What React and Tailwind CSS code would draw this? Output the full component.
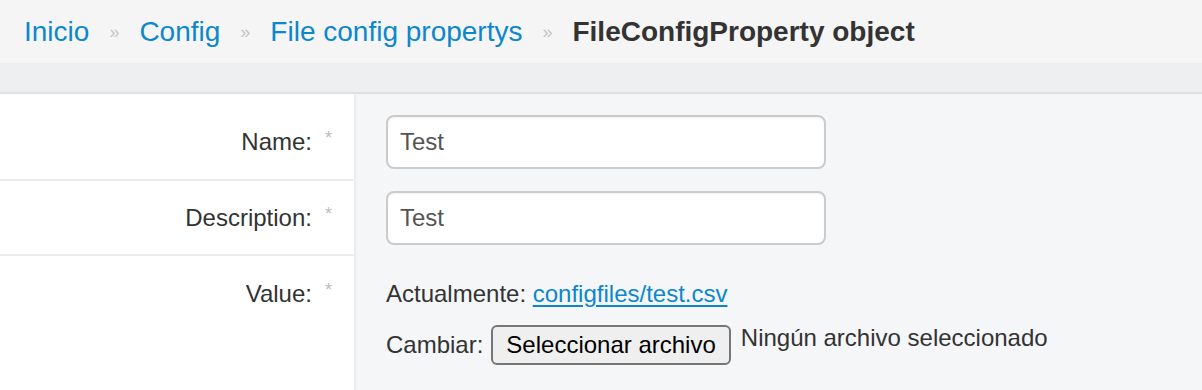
import React from "react";

const font = { fontFamily: '"Liberation Sans", Arial, sans-serif' };

function Crumb({ children }) {
  return (
    <a href="#" className="text-[#0c87cc] hover:underline">
      {children}
    </a>
  );
}

function Sep() {
  return <span className="mx-[20px] text-[18px] text-[#c4c4c4]">»</span>;
}

function Label({ text }) {
  return (
    <div className="flex h-[54px] items-center justify-end pr-[22px] text-[24px] text-[#333]">
      <span>{text}</span>
      <span className="ml-[13px] text-[18px] text-[#bdbdbd] -mt-[8px]">*</span>
    </div>
  );
}

function Row({ label, first, last, children }) {
  return (
    <div className="flex">
      <div
        className={
          "w-[356px] shrink-0 bg-white border-r-2 border-[#ececec] " +
          (last ? "" : "border-b-2 border-b-[#ececec] ") +
          (first ? "pt-[21px] pb-[10px]" : "pt-[10px] pb-[9px]")
        }
      >
        <Label text={label} />
      </div>
      <div
        className={
          "flex-1 bg-[#f5f6f8] pl-[30px] " +
          (first ? "pt-[21px] pb-[10px]" : "pt-[10px] pb-[9px]")
        }
      >
        {children}
      </div>
    </div>
  );
}

function TextInput({ value }) {
  return (
    <input
      type="text"
      defaultValue={value}
      className="h-[54px] w-[440px] rounded-[8px] border-2 border-[#cbcbcb] bg-white px-[12px] text-[24px] text-[#555] shadow-[inset_0_1px_2px_rgba(0,0,0,0.06)] outline-none"
      style={font}
    />
  );
}

export default function App() {
  return (
    <div className="min-h-[390px] bg-[#f5f6f8]" style={font}>
      {/* breadcrumbs */}
      <div className="flex h-[63px] items-center bg-[#f5f5f5] px-[24px] text-[28px] leading-none">
        <Crumb>Inicio</Crumb>
        <Sep />
        <Crumb>Config</Crumb>
        <Sep />
        <Crumb>File config propertys</Crumb>
        <Sep />
        <span className="font-bold text-[#333]">FileConfigProperty object</span>
      </div>
      <div className="h-[31px] border-b-2 border-[#dfe0e2] bg-[#eeeff1]" />

      {/* form */}
      <Row label="Name:" first>
        <TextInput value="Test" />
      </Row>
      <Row label="Description:">
        <TextInput value="Test" />
      </Row>
      <div className="flex h-[134px]">
        <div className="w-[356px] shrink-0 border-r-2 border-[#ececec] bg-white pt-[11px]">
          <Label text="Value:" />
        </div>
        <div className="flex-1 bg-[#f5f6f8] pl-[30px] pt-[11px] text-[24px] text-[#333]">
          <p className="flex h-[54px] items-center">
            Actualmente:&nbsp;
            <a href="#" className="text-[#0c87cc] underline underline-offset-[3px]">
              configfiles/test.csv
            </a>
          </p>
          <div className="mt-[4px] flex items-center">
            <span>Cambiar:</span>
            <button className="ml-[8px] h-[40px] rounded-[6px] border-2 border-[#767676] bg-[#efefef] px-[13px] text-[24px] leading-none text-black">
              Seleccionar archivo
            </button>
            <span className="ml-[10px] -mt-[14px]">Ningún archivo seleccionado</span>
          </div>
        </div>
      </div>
    </div>
  );
}
